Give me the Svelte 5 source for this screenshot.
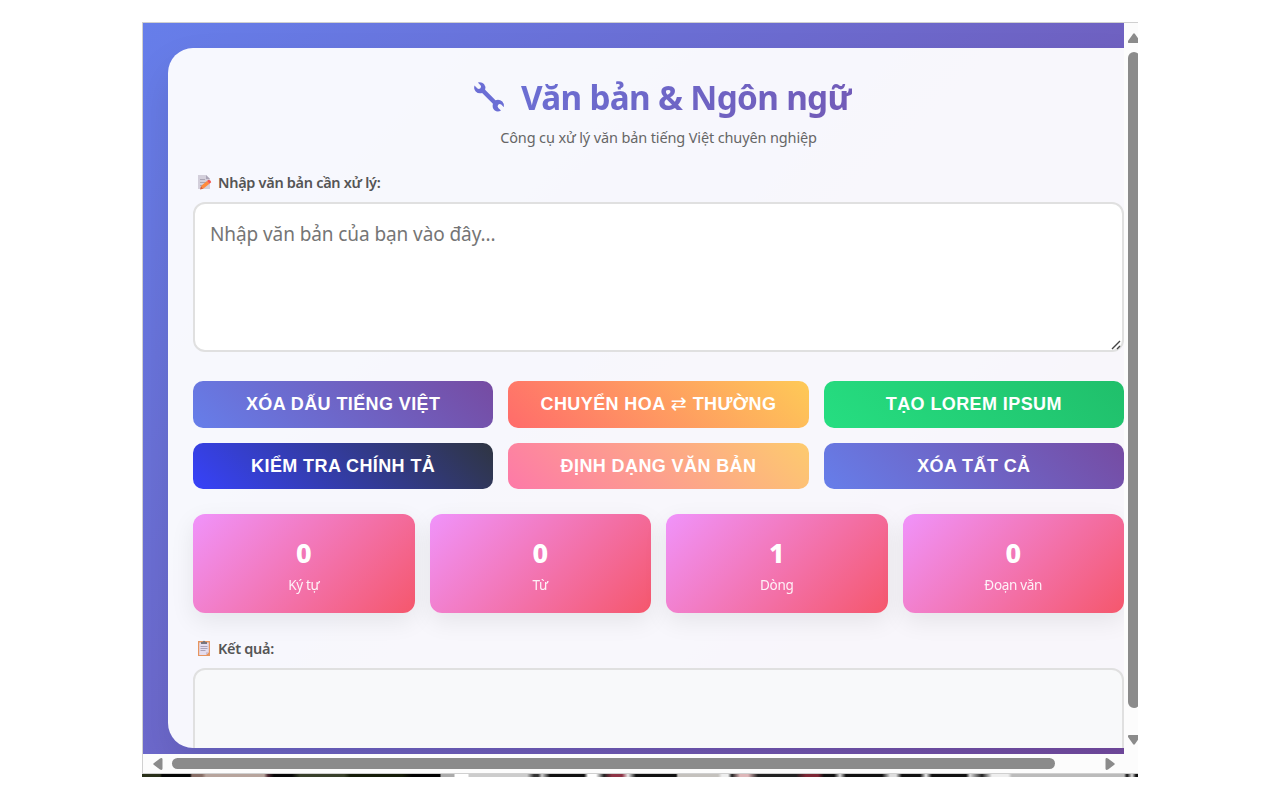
<script lang="ts">
  type Action = { label: string; variant: string; swap?: string };
  type Stat = { value: number; label: string };

  const actions: Action[] = [
    { label: "Xóa dấu tiếng Việt", variant: "primary" },
    { label: "Chuyển hoa", swap: "thường", variant: "warm" },
    { label: "Tạo Lorem Ipsum", variant: "success" },
    { label: "Kiểm tra chính tả", variant: "dark" },
    { label: "Định dạng văn bản", variant: "peach" },
    { label: "Xóa tất cả", variant: "primary" },
  ];

  let text = $state("");

  let stats: Stat[] = $derived([
    { value: text.length, label: "Ký tự" },
    { value: text.split(/\s+/).filter(Boolean).length, label: "Từ" },
    { value: text.split("\n").length, label: "Dòng" },
    { value: text.split(/\n\s*\n/).filter((p) => p.trim()).length, label: "Đoạn văn" },
  ]);
</script>

<div class="frame">
  <div class="window">
    <div class="viewport">
      <div class="page">
        <main class="card">
          <h1>
            <svg class="wrench" viewBox="0 0 32 32" aria-hidden="true">
              <path
                fill="#6b6ed5"
                d="M4.800 1.500Q8.600.4 11 3.100Q13 5.400 12.100 8.700L22.500 19.200Q26.500 18 29.300 20.500Q31.700 22.900 30.900 26.300L28.200 23.600Q26.600 22.400 25.200 23.800Q23.900 25.400 25.300 26.900L28 29.600Q24.400 31.700 21.500 29.200Q18.900 26.800 19.900 22.700L9.100 12Q5.200 13 2.700 10.400Q.4 8 1.500 4.600L4.500 7.500Q6 8.600 7.400 7.200Q8.700 5.600 7.500 4.200Z"
              />
            </svg>
            <span>Văn bản &amp; Ngôn ngữ</span>
          </h1>
          <p class="subtitle">Công cụ xử lý văn bản tiếng Việt chuyên nghiệp</p>

          <label class="label" for="input">
            <svg viewBox="0 0 16 16" aria-hidden="true">
              <path fill="#d3cfdb" d="M2 1h8l4 4v10H2z" />
              <path fill="#aaa4b6" d="M10 1v4h4z" />
              <path stroke="#aaa5b4" d="M4 5.500h5M4 8.500h7M4 11.500h3" />
              <path fill="#ff8a3c" d="m5 12 6-5 2.400 2.700-6.200 5z" />
              <path fill="#f4544e" d="m11 7 1.500-1.200q2.400.3 2.700 2.500l-1.800 1.400z" />
              <path fill="#d95832" d="m5 12-1 3.500 3.200-.8z" />
            </svg>
            <span>Nhập văn bản cần xử lý:</span>
          </label>
          <div class="field">
            <textarea id="input" placeholder="Nhập văn bản của bạn vào đây..." bind:value={text}></textarea>
            <svg class="grip" viewBox="0 0 10 10" aria-hidden="true">
              <path d="M1 9 9 1M6 9l3-3" />
            </svg>
          </div>

          <div class="actions">
            {#each actions as action}
              <button class="btn {action.variant}">
                {action.label}
                {#if action.swap}<span class="arrow">⇄</span> {action.swap}{/if}
              </button>
            {/each}
          </div>

          <div class="stats">
            {#each stats as stat}
              <div class="stat">
                <div class="stat-value">{stat.value}</div>
                <div class="stat-label">{stat.label}</div>
              </div>
            {/each}
          </div>

          <div class="label result-label">
            <svg viewBox="0 0 16 16" aria-hidden="true">
              <path fill="#e7955f" d="M2 1h12v15H2z" />
              <path fill="#e4dcee" d="M3.200 2.500h9.600v9.800L10 15H3.200z" />
              <path fill="#cbbbd1" d="M12.800 12.300H10V15z" />
              <path fill="#77747d" d="M5 4V2h1.500q1.500-2.500 3 0H11v2z" />
              <path stroke="#aaa2b8" d="M4.500 6.500h7M4.500 8.500h7M4.500 10.500h5" />
            </svg>
            <span>Kết quả:</span>
          </div>
          <div class="result"></div>
        </main>
      </div>
    </div>

    <div class="scroll-y">
      <svg viewBox="0 0 12 10"><path d="M5 1q1-1.500 2 0l5 7q.5 2-1 2H1q-1.500 0-1-2z" /></svg>
      <div class="thumb"></div>
      <svg viewBox="0 0 12 10"><path d="M5 9q1 1.500 2 0l5-7q.5-2-1-2H1Q-.5 0 0 2z" /></svg>
    </div>

    <div class="scroll-x">
      <svg viewBox="0 0 10 12"><path d="M1 5q-1.500 1 0 2l6 4.600q2.500 1 2.500-1V1.400q0-2-2.500-1z" /></svg>
      <div class="thumb"></div>
      <svg viewBox="0 0 10 12"><path d="M9 5q1.500 1 0 2l-6 4.600q-2.500 1-2.500-1V1.400q0-2 2.500-1z" /></svg>
    </div>
  </div>
  <div class="strip"></div>
</div>

<style>
  :global(body) {
    margin: 0;
    background: #fff;
    overflow: hidden;
  }
  .frame {
    width: 996px;
    margin: 22px 0 0 142px;
    overflow: hidden;
    font-family: "Noto Sans", "Open Sans", sans-serif;
  }
  .window {
    box-sizing: border-box;
    height: 752px;
    display: grid;
    grid-template-columns: 981px 14px;
    grid-template-rows: 731px 19px;
    border: solid #d0d0d0;
    border-width: 1px 0 1px 1px;
    background: #fcfcfc;
    overflow: hidden;
  }
  .viewport {
    overflow: hidden;
  }
  .page {
    box-sizing: border-box;
    width: 1031px;
    height: 731px;
    padding: 25px 25px 6px;
    background: linear-gradient(135deg, #667eea 0%, #764ba2 100%);
  }
  .card {
    box-sizing: border-box;
    height: 700px;
    padding: 29px 25px 0;
    border-radius: 25px;
    background: rgba(255, 255, 255, 0.95);
    box-shadow: 0 20px 40px rgba(0, 0, 0, 0.1);
    overflow: hidden;
  }

  h1 {
    display: flex;
    justify-content: center;
    gap: 16px;
    height: 40px;
    margin: 0 0 9px;
    padding-left: 8px;
    font-size: 33.3px;
    font-weight: 700;
    line-height: 40px;
    letter-spacing: -0.68px;
    white-space: nowrap;
  }
  h1 span {
    height: 40px;
    padding-bottom: 8px;
    background: linear-gradient(135deg, #6b6fd4, #725ab6);
    background-clip: text;
    -webkit-background-clip: text;
    color: transparent;
  }
  .wrench {
    width: 32px;
    height: 32px;
    margin-top: 4px;
  }
  .subtitle {
    margin: 0 0 25px;
    color: #666;
    font-size: 14.5px;
    line-height: 22px;
    letter-spacing: -0.13px;
    text-align: center;
  }

  .label {
    display: flex;
    align-items: center;
    gap: 6px;
    height: 18px;
    margin: 0 0 11px 3px;
    color: #555;
    font-size: 14.5px;
    font-weight: 600;
    letter-spacing: -0.3px;
  }
  .label svg {
    width: 16px;
    height: 16px;
    fill: none;
  }
  .field {
    position: relative;
    margin-bottom: 29px;
  }
  textarea {
    box-sizing: border-box;
    display: block;
    width: 100%;
    height: 150px;
    padding: 16px 15px 14px;
    border: 2px solid #e0e0e0;
    border-radius: 12px;
    background: #fff;
    font-family: inherit;
    font-size: 19px;
    line-height: 29px;
    letter-spacing: -0.09px;
    resize: none;
    outline: none;
  }
  textarea::placeholder {
    color: #757575;
  }
  .grip {
    position: absolute;
    right: 3px;
    bottom: 2px;
    width: 10px;
    height: 10px;
    fill: none;
    stroke: #444;
    stroke-width: 1.4;
  }

  .actions {
    display: grid;
    grid-template-columns: repeat(3, 1fr);
    gap: 15px;
    margin-bottom: 25px;
  }
  .btn {
    height: 46.5px;
    padding: 0;
    border: 0;
    border-radius: 10px;
    color: #fff;
    font: 700 18px/46px "Liberation Sans", sans-serif;
    letter-spacing: 0.4px;
    text-transform: uppercase;
    cursor: pointer;
  }
  .arrow {
    display: inline-block;
    width: 17px;
    font: 400 19px/20px "DejaVu Sans", sans-serif;
    letter-spacing: 0;
  }
  .primary {
    background: linear-gradient(45deg, #667eea, #764ba2);
  }
  .warm {
    background: linear-gradient(45deg, #ff6b6b, #feca57);
  }
  .success {
    background: linear-gradient(45deg, #26de81, #20bf6b);
  }
  .dark {
    background: linear-gradient(45deg, #3742fa, #2f3542);
  }
  .peach {
    background: linear-gradient(45deg, #fd79a8, #fdcb6e);
  }

  .stats {
    display: grid;
    grid-template-columns: repeat(4, 1fr);
    gap: 15px;
    margin-bottom: 26px;
  }
  .stat {
    box-sizing: border-box;
    height: 99px;
    padding-top: 20px;
    border-radius: 12px;
    background: linear-gradient(135deg, #f093fb 0%, #f5576c 100%);
    box-shadow: 0 8px 25px rgba(0, 0, 0, 0.08);
    color: #fff;
    text-align: center;
  }
  .stat-value {
    margin-bottom: 5px;
    font-size: 27px;
    font-weight: 800;
    line-height: 37px;
  }
  .stat-label {
    font-size: 13.5px;
    line-height: 18px;
    letter-spacing: -0.3px;
    opacity: 0.9;
  }
  .result {
    box-sizing: border-box;
    height: 120px;
    border: 2px solid #e0e0e0;
    border-radius: 12px;
    background: #f8f9fa;
  }

  .scroll-y,
  .scroll-x {
    display: flex;
    align-items: center;
    justify-content: space-between;
  }
  .scroll-y svg,
  .scroll-x svg {
    flex: none;
    fill: #8b8b8b;
  }
  .scroll-y {
    flex-direction: column;
    align-items: flex-start;
    width: 16px;
    padding: 10px 0 9px 3.5px;
    box-sizing: border-box;
    height: 731px;
  }
  .scroll-y svg {
    width: 12px;
    height: 10px;
  }
  .scroll-y .thumb {
    width: 12px;
    height: 656px;
    margin: 9px 0 auto 0.5px;
    border-radius: 6px;
    background: #8b8b8b;
  }
  .scroll-x {
    box-sizing: border-box;
    width: 981px;
    padding: 0 9px 0 10px;
  }
  .scroll-x svg {
    width: 10px;
    height: 12px;
  }
  .scroll-x .thumb {
    width: 883px;
    height: 11px;
    margin: 0 auto 0 9px;
    border-radius: 6px;
    background: #8b8b8b;
  }

  /* top sliver of the photo sitting under the window */
  .strip {
    height: 3px;
    background: linear-gradient(
      90deg,
      #293019 0 18px,
      #050605 20px 48px,
      #866d65 50px 60px,
      #b7a49c 64px 122px,
      #4a2730 126px,
      #080808 132px 150px,
      #38402a 158px 202px,
      #151c08 208px 260px,
      #020202 270px 298px,
      #aaa 299px 312px,
      #fff 313px 326px,
      #ccc 327px 385px,
      #333 392px 396px,
      #ccc 400px,
      #111 408px 442px,
      #fff 446px 454px,
      #222 462px,
      #8e3345 470px 480px,
      #eee 486px,
      #111 494px 534px,
      #c4c1bd 536px 576px,
      #eee 580px 586px,
      #222 590px,
      #deb7b9 598px 606px,
      #222 616px 654px,
      #7d2634 664px 676px,
      #111 682px 692px,
      #ddd 698px,
      #111 704px 740px,
      #ddd 748px 754px,
      #111 760px 778px,
      #eee 784px,
      #111 790px 824px,
      #ddd 828px,
      #222 840px,
      #eee 850px 866px,
      #bbb 870px 982px,
      #111 985px,
      #ddd 990px,
      #111 994px
    );
  }
</style>
